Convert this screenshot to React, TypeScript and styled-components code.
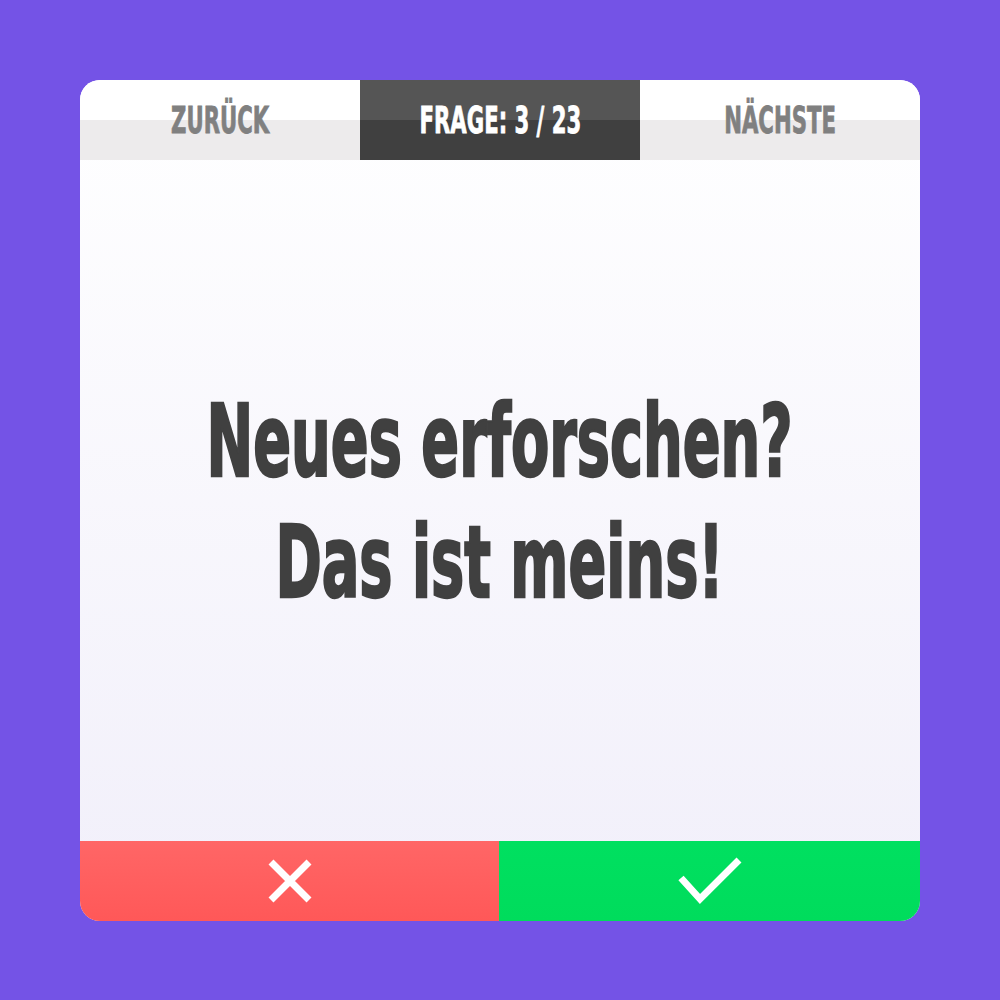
import React from "react";
import styled, { createGlobalStyle } from "styled-components";

const GlobalStyle = createGlobalStyle`
  html, body {
    margin: 0;
    padding: 0;
    background: #7453e6;
  }
  body {
    font-family: "DejaVu Sans Condensed", "Liberation Sans Narrow", "Liberation Sans", sans-serif;
  }
`;

const Page = styled.div`
  width: 1000px;
  height: 1000px;
  display: flex;
  align-items: center;
  justify-content: center;
  background: #7453e6;
`;

const Card = styled.div`
  width: 840px;
  height: 841px;
  border-radius: 20px;
  overflow: hidden;
  display: flex;
  flex-direction: column;
  background: linear-gradient(180deg, #ffffff 0%, #f1effa 100%);
`;

const Header = styled.div`
  height: 80px;
  display: grid;
  grid-template-columns: repeat(3, 1fr);
`;

const Tab = styled.div<{ $active?: boolean }>`
  display: flex;
  align-items: center;
  justify-content: center;
  font-weight: 700;
  font-size: 38px;
  color: ${(p) => (p.$active ? "#ffffff" : "#808080")};
  -webkit-text-stroke: 0.8px ${(p) => (p.$active ? "#ffffff" : "#808080")};
  background: ${(p) =>
    p.$active
      ? "linear-gradient(180deg, #555555 0 50%, #404040 50% 100%)"
      : "linear-gradient(180deg, #ffffff 0 50%, #edebec 50% 100%)"};
`;

const Squeeze = styled.span<{ $x: number }>`
  display: inline-block;
  white-space: nowrap;
  transform: scaleX(${(p) => p.$x});
`;

const Body = styled.div`
  flex: 1;
  display: flex;
  align-items: center;
  justify-content: center;
  padding-top: 4px;
`;

const Question = styled.div`
  display: flex;
  flex-direction: column;
  align-items: center;
  font-weight: 700;
  font-size: 100px;
  line-height: 121px;
  color: #404040;
  -webkit-text-stroke: 2.5px #404040;
`;

const Footer = styled.div`
  height: 80px;
  display: grid;
  grid-template-columns: 419px 1fr;
`;

const Answer = styled.button<{ $yes?: boolean }>`
  border: none;
  padding: 0;
  display: flex;
  align-items: center;
  justify-content: center;
  cursor: pointer;
  background: ${(p) =>
    p.$yes
      ? "linear-gradient(180deg, #00e060 0%, #00dc5c 100%)"
      : "linear-gradient(180deg, #ff6666 0%, #ff5858 100%)"};
`;

function CrossIcon() {
  return (
    <svg width="46" height="46" viewBox="0 0 46 46">
      <path d="M4 4 L42 42 M42 4 L4 42" stroke="#fff" strokeWidth="7" fill="none" />
    </svg>
  );
}

function CheckIcon() {
  return (
    <svg width="64" height="48" viewBox="0 0 64 48">
      <path d="M3 21 L22 42 L61 3" stroke="#fff" strokeWidth="7" fill="none" />
    </svg>
  );
}

export default function App() {
  return (
    <>
      <GlobalStyle />
      <Page>
        <Card>
          <Header>
            <Tab>
              <Squeeze $x={0.62}>ZURÜCK</Squeeze>
            </Tab>
            <Tab $active>
              <Squeeze $x={0.62}>FRAGE: 3 / 23</Squeeze>
            </Tab>
            <Tab>
              <Squeeze $x={0.62}>NÄCHSTE</Squeeze>
            </Tab>
          </Header>
          <Body>
            <Question>
              <Squeeze $x={0.62}>Neues erforschen?</Squeeze>
              <Squeeze $x={0.62}>Das ist meins!</Squeeze>
            </Question>
          </Body>
          <Footer>
            <Answer aria-label="Nein">
              <CrossIcon />
            </Answer>
            <Answer $yes aria-label="Ja">
              <CheckIcon />
            </Answer>
          </Footer>
        </Card>
      </Page>
    </>
  );
}
